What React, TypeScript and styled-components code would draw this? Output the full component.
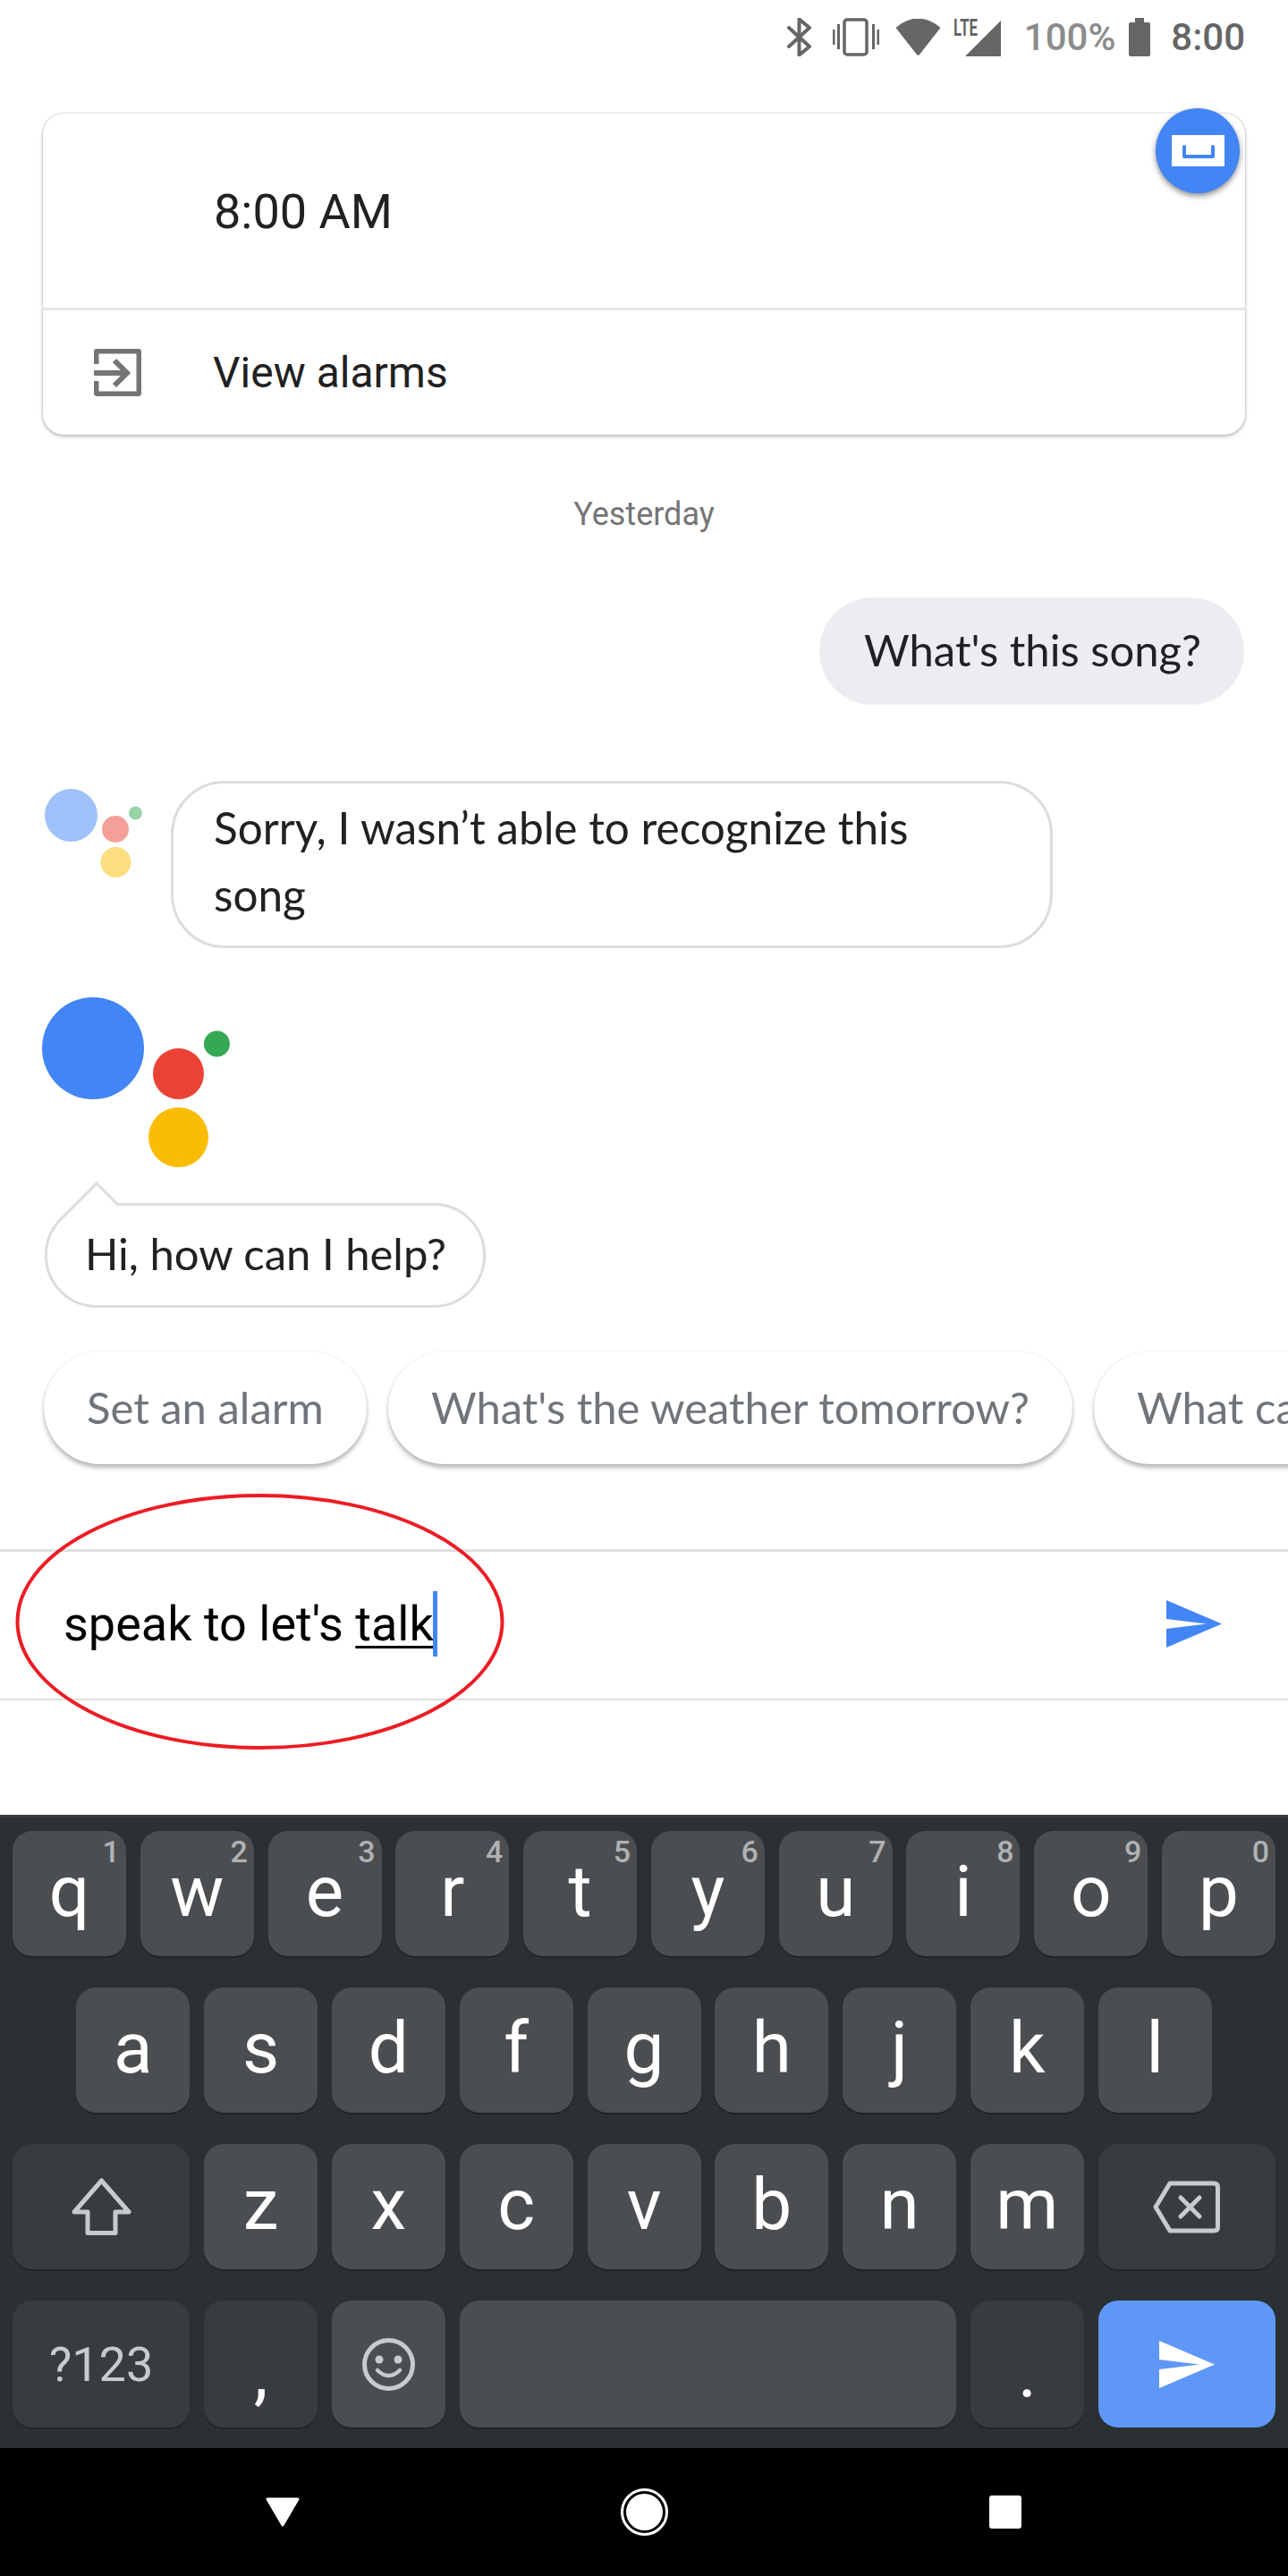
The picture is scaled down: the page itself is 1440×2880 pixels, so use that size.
import React from 'react';
import styled, { createGlobalStyle } from 'styled-components';

const GlobalStyle = createGlobalStyle`
    body {
        margin: 0;
        background: #fff;
        font-family: Roboto, "Liberation Sans", sans-serif;
    }
`;

const rowOne = [
    ['q', '1'],
    ['w', '2'],
    ['e', '3'],
    ['r', '4'],
    ['t', '5'],
    ['y', '6'],
    ['u', '7'],
    ['i', '8'],
    ['o', '9'],
    ['p', '0'],
];
const rowTwo = ['a', 's', 'd', 'f', 'g', 'h', 'j', 'k', 'l'];
const rowThree = ['z', 'x', 'c', 'v', 'b', 'n', 'm'];

const SendIcon: React.FC<{ color: string }> = ({ color }) => (
    <svg width="62" height="53" viewBox="0 0 62 53">
        <path d="M0 0L62 26.5L0 53V32L45 26.5L0 21Z" fill={color} />
    </svg>
);

const App: React.FC = () => {
    return (
        <Page>
            <GlobalStyle />
            <StatusBar>
                <StatusIcon width="27" height="43" viewBox="0 0 27 43">
                    <path
                        d="M2 11L25 32L13.5 41.5V1.5L25 11L2 32"
                        fill="none"
                        stroke="#666"
                        strokeWidth="4"
                        strokeLinejoin="round"
                        strokeLinecap="round"
                    />
                </StatusIcon>
                <StatusIcon $gap={24} width="52" height="43" viewBox="0 0 52 43">
                    <rect x="13" y="2" width="25" height="39" rx="3" fill="none" stroke="#666" strokeWidth="3.5" />
                    <path d="M0 13h2.5v17H0zM5 7h3v28H5zM44 7h3v28h-3zM49.5 13H52v17h-2.5z" fill="#666" />
                </StatusIcon>
                <StatusIcon $gap={18} width="51" height="41" viewBox="0 0 51 41">
                    <path
                        d="M1 10Q25.5 -10 50 10L26.5 40Q25.5 41 24.5 40Z"
                        fill="#666"
                        stroke="#666"
                        strokeLinejoin="round"
                    />
                </StatusIcon>
                <StatusIcon $gap={14} width="53" height="43" viewBox="0 0 53 43">
                    <text
                        x="0"
                        y="20"
                        fontFamily="Roboto, sans-serif"
                        fontWeight="700"
                        fontSize="26"
                        fill="#666"
                        textLength="27"
                        lengthAdjust="spacingAndGlyphs">
                        LTE
                    </text>
                    <path d="M13 43L53 3V43Z" fill="#666" />
                </StatusIcon>
                <BatteryText>100%</BatteryText>
                <StatusIcon $gap={15} width="24" height="43" viewBox="0 0 24 43">
                    <path d="M7 0H17V5H22Q24 5 24 7V41Q24 43 22 43H2Q0 43 0 41V7Q0 5 2 5H7Z" fill="#666" />
                </StatusIcon>
                <ClockText>8:00</ClockText>
            </StatusBar>

            <AlarmCard>
                <AlarmTime>8:00 AM</AlarmTime>
                <CardDivider />
                <AlarmLink>
                    <svg width="53" height="53" viewBox="0 0 53 53">
                        <path
                            d="M2.5 17V5Q2.5 2.5 5 2.5H48Q50.5 2.5 50.5 5V48Q50.5 50.5 48 50.5H5Q2.5 50.5 2.5 48V36"
                            fill="none"
                            stroke="#757575"
                            strokeWidth="6"
                        />
                        <path
                            d="M0 27H36M23 13L37 27L23 41"
                            fill="none"
                            stroke="#757575"
                            strokeWidth="6"
                        />
                    </svg>
                    <AlarmLinkText>View alarms</AlarmLinkText>
                </AlarmLink>
                <Fab>
                    <svg width="59" height="35" viewBox="0 0 59 35">
                        <rect width="59" height="35" fill="#fff" />
                        <path
                            d="M14 13V24H46V13"
                            fill="none"
                            stroke="#4285f4"
                            strokeWidth="4"
                            strokeLinecap="round"
                            strokeLinejoin="round"
                        />
                    </svg>
                </Fab>
            </AlarmCard>

            <DayLabel>Yesterday</DayLabel>
            <UserBubble>What's this song?</UserBubble>

            <ReplyRow>
                <SmallLogo width="109" height="99" viewBox="0 0 109 99">
                    <circle cx="29.5" cy="29.5" r="29.5" fill="#4285f4" />
                    <circle cx="79" cy="45" r="15" fill="#ea4335" />
                    <circle cx="79.5" cy="82" r="17" fill="#fbbc04" />
                    <circle cx="101.5" cy="27" r="7.5" fill="#34a853" />
                </SmallLogo>
                <ReplyBubble>
                    Sorry, I wasn’t able to recognize this
                    <br />
                    song
                </ReplyBubble>
            </ReplyRow>

            <BigLogo width="210" height="190" viewBox="0 0 210 190">
                <circle cx="57" cy="57" r="57" fill="#4285f4" />
                <circle cx="152.5" cy="85.5" r="28.5" fill="#ea4335" />
                <circle cx="152.5" cy="156.5" r="33.5" fill="#fbbc04" />
                <circle cx="195.5" cy="52" r="14.5" fill="#34a853" />
            </BigLogo>

            <GreetingBubble>
                <GreetingText>Hi, how can I help?</GreetingText>
            </GreetingBubble>

            <ChipRow>
                <Chip>Set an alarm</Chip>
                <Chip>What's the weather tomorrow?</Chip>
                <Chip>What can you do?</Chip>
            </ChipRow>

            <InputBar>
                <InputText>
                    speak to let's <Composing>talk</Composing>
                    <Caret />
                </InputText>
                <SendIcon color="#4285f4" />
            </InputBar>

            <Spacer />

            <Keyboard>
                <KeyRow>
                    {rowOne.map(([letter, hint]) => (
                        <LetterKey key={letter}>
                            {letter}
                            <Hint>{hint}</Hint>
                        </LetterKey>
                    ))}
                </KeyRow>
                <KeyRow>
                    {rowTwo.map(letter => (
                        <LetterKey key={letter}>{letter}</LetterKey>
                    ))}
                </KeyRow>
                <KeyRow>
                    <Key $width={198.5} $dark>
                        <svg width="67" height="64" viewBox="0 0 67 64">
                            <path
                                d="M33.5 3L64 38H49V61.5H18V38H3Z"
                                fill="none"
                                stroke="#c8cacb"
                                strokeWidth="5"
                                strokeLinejoin="round"
                            />
                        </svg>
                    </Key>
                    {rowThree.map(letter => (
                        <LetterKey key={letter}>{letter}</LetterKey>
                    ))}
                    <Key $width={198.5} $dark>
                        <svg width="75" height="59" viewBox="0 0 75 59">
                            <path
                                d="M3 29.5L19 3H68Q72.5 3 72.5 7V52Q72.5 56 68 56H19Z"
                                fill="none"
                                stroke="#c8cacb"
                                strokeWidth="5"
                                strokeLinejoin="round"
                            />
                            <path
                                d="M31 19L52 40M52 19L31 40"
                                fill="none"
                                stroke="#c8cacb"
                                strokeWidth="5"
                                strokeLinecap="round"
                            />
                        </svg>
                    </Key>
                </KeyRow>
                <KeyRow>
                    <SymbolKey $width={198.5} $dark>
                        ?123
                    </SymbolKey>
                    <PunctuationKey $dark>,</PunctuationKey>
                    <IconKey>
                        <svg width="59" height="59" viewBox="0 0 59 59">
                            <circle cx="29.5" cy="29.5" r="27" fill="none" stroke="#c8cacb" strokeWidth="5" />
                            <circle cx="19" cy="24" r="4.5" fill="#c8cacb" />
                            <circle cx="40" cy="24" r="4.5" fill="#c8cacb" />
                            <path
                                d="M17 36Q29.5 48 42 36"
                                fill="none"
                                stroke="#c8cacb"
                                strokeWidth="4.5"
                                strokeLinecap="round"
                            />
                        </svg>
                    </IconKey>
                    <IconKey $width={555.5} />
                    <PunctuationKey $dark>.</PunctuationKey>
                    <ActionKey>
                        <SendIcon color="#fff" />
                    </ActionKey>
                </KeyRow>
            </Keyboard>

            <NavBar>
                <svg width="38" height="33" viewBox="0 0 38 33">
                    <path
                        d="M2 2H36L19 31Z"
                        fill="#fff"
                        stroke="#fff"
                        strokeWidth="3"
                        strokeLinejoin="round"
                    />
                </svg>
                <HomeRing>
                    <HomeDot />
                </HomeRing>
                <RecentSquare />
            </NavBar>

            <Annotation width="547" height="288" viewBox="0 0 547 288">
                <ellipse cx="273.5" cy="144" rx="271" ry="141" fill="none" stroke="#ed1c24" strokeWidth="4" />
            </Annotation>
        </Page>
    );
};

const Page = styled.div`
    position: relative;
    display: flex;
    flex-direction: column;
    width: 1440px;
    height: 2880px;
    overflow: hidden;
    background: #fff;
`;

const StatusBar = styled.div`
    display: flex;
    justify-content: flex-end;
    align-items: center;
    height: 83px;
    padding-right: 48px;
    flex-shrink: 0;
`;

const StatusIcon = styled.svg<{ $gap?: number }>`
    margin-left: ${p => p.$gap ?? 0}px;
    flex-shrink: 0;
`;

const BatteryText = styled.span`
    margin-left: 26px;
    font-size: 42px;
    color: #8c8c8c;
    font-weight: 500;
`;

const ClockText = styled.span`
    margin-left: 23px;
    font-size: 42px;
    color: #666;
    font-weight: 500;
`;

const AlarmCard = styled.div`
    position: relative;
    display: flex;
    flex-direction: column;
    margin: 44px 48px 0;
    height: 359px;
    flex-shrink: 0;
    border-radius: 23px;
    background: #fff;
    box-shadow: 0 2px 4px rgba(0, 0, 0, 0.25), 0 0 2px rgba(0, 0, 0, 0.25);
`;

const AlarmTime = styled.div`
    box-sizing: border-box;
    display: flex;
    align-items: center;
    height: 217px;
    padding: 2px 0 0 191px;
    font-size: 54px;
    color: #212121;
`;

const CardDivider = styled.div`
    height: 3px;
    background: #e4e4e4;
`;

const AlarmLink = styled.div`
    display: flex;
    align-items: center;
    flex: 1;
    padding-left: 57px;
`;

const AlarmLinkText = styled.span`
    margin-left: 80px;
    font-size: 48px;
    color: #212121;
`;

const Fab = styled.div`
    position: absolute;
    top: -6px;
    right: 6px;
    display: flex;
    justify-content: center;
    align-items: center;
    width: 94px;
    height: 95px;
    border-radius: 50%;
    background: #4285f4;
    box-shadow: 0 3px 6px rgba(0, 0, 0, 0.45);
`;

const DayLabel = styled.div`
    margin-top: 67px;
    height: 44px;
    line-height: 44px;
    text-align: center;
    font-size: 36px;
    color: #757575;
`;

const UserBubble = styled.div`
    align-self: flex-end;
    margin: 71px 49px 0 0;
    height: 120px;
    line-height: 116px;
    padding: 0 48px 0 50px;
    border-radius: 60px;
    background: #ebedf0;
    font-family: Lato, sans-serif;
    font-size: 49px;
    color: #202124;
`;

const ReplyRow = styled.div`
    display: flex;
    align-items: flex-start;
    margin: 85px 0 0 50px;
`;

const SmallLogo = styled.svg`
    margin-top: 9px;
    opacity: 0.5;
    flex-shrink: 0;
`;

const ReplyBubble = styled.div`
    box-sizing: border-box;
    width: 986px;
    height: 187px;
    margin-left: 32px;
    padding: 12px 40px 0 45px;
    border: 3px solid #dadce0;
    border-radius: 60px;
    font-family: Lato, sans-serif;
    font-size: 49.5px;
    line-height: 75px;
    color: #202124;
`;

const BigLogo = styled.svg`
    margin: 55px 0 0 47px;
    flex-shrink: 0;
`;

const GreetingBubble = styled.div`
    position: relative;
    box-sizing: border-box;
    display: flex;
    align-items: center;
    width: 493px;
    height: 117px;
    margin: 40px 0 0 50px;
    padding: 0 0 6px 42px;
    border: 3px solid #dadce0;
    border-radius: 58px;
    &::before {
        content: '';
        position: absolute;
        left: 55px;
        top: -27px;
        width: 34px;
        height: 61px;
        box-sizing: border-box;
        border-top: 3px solid #dadce0;
        border-left: 3px solid #dadce0;
        background: #fff;
        transform: rotate(45deg);
        transform-origin: top left;
    }
`;

const GreetingText = styled.span`
    position: relative;
    font-family: Lato, sans-serif;
    font-size: 49px;
    color: #202124;
`;

const ChipRow = styled.div`
    display: flex;
    gap: 24px;
    margin-top: 43px;
    padding: 6px 0 12px 49px;
    overflow: hidden;
    flex-shrink: 0;
`;

const Chip = styled.div`
    flex-shrink: 0;
    height: 126px;
    line-height: 124px;
    padding: 0 48px;
    box-sizing: border-box;
    border-radius: 63px;
    background: #fff;
    box-shadow: 0 4px 5px rgba(0, 0, 0, 0.28), 0 0 2px rgba(0, 0, 0, 0.1);
    font-family: Lato, sans-serif;
    font-size: 49px;
    color: #70757a;
    white-space: nowrap;
`;

const InputBar = styled.div`
    box-sizing: border-box;
    display: flex;
    justify-content: space-between;
    align-items: center;
    height: 169px;
    margin-top: 83px;
    padding: 0 74px 3px 71px;
    border-top: 3px solid #e0e0e0;
    border-bottom: 2px solid #e0e0e0;
    flex-shrink: 0;
`;

const InputText = styled.div`
    display: flex;
    align-items: center;
    white-space: pre;
    font-size: 54px;
    color: #000;
`;

const Composing = styled.span`
    text-decoration: underline;
    text-decoration-thickness: 3px;
    text-underline-offset: 6px;
`;

const Caret = styled.span`
    width: 5px;
    height: 73px;
    margin-left: -1px;
    background: #4285f4;
`;

const Spacer = styled.div`
    flex: 1;
`;

const Keyboard = styled.div`
    display: flex;
    flex-direction: column;
    gap: 35px;
    height: 708px;
    box-sizing: border-box;
    padding-top: 15px;
    border-top: 3px solid #373c40;
    background: #2b3033;
    flex-shrink: 0;
`;

const KeyRow = styled.div`
    display: flex;
    justify-content: center;
    gap: 15.8px;
`;

const Key = styled.div<{ $width?: number; $dark?: boolean }>`
    position: relative;
    display: flex;
    justify-content: center;
    align-items: center;
    flex: 0 0 ${p => p.$width ?? 127}px;
    height: 140px;
    box-sizing: border-box;
    border-radius: 22px;
    background: ${p => (p.$dark ? '#383c40' : '#4a4e51')};
    box-shadow: 0 2px 0 #222528;
    font-size: 80px;
    color: #fff;
`;

const LetterKey = styled(Key)`
    padding-bottom: 4px;
`;

const IconKey = styled(Key)`
    height: 142px;
`;

const SymbolKey = styled(IconKey)`
    font-size: 54px;
    color: #c8cacb;
`;

const PunctuationKey = styled(IconKey)`
    padding-top: 20px;
`;

const ActionKey = styled(IconKey)`
    flex-basis: 198.5px;
    background: #5e97f6;
    box-shadow: none;
`;

const Hint = styled.span`
    position: absolute;
    top: 3px;
    right: 7px;
    font-size: 34px;
    line-height: 40px;
    font-weight: 500;
    color: #b0b2b4;
`;

const NavBar = styled.div`
    box-sizing: border-box;
    flex: 0 0 143px;
    display: grid;
    grid-template-columns: 1fr 1fr 1fr;
    justify-items: center;
    align-items: center;
    background: #000;
    padding: 0 114px;
`;

const HomeRing = styled.div`
    box-sizing: border-box;
    display: flex;
    justify-content: center;
    align-items: center;
    width: 53px;
    height: 53px;
    border: 3px solid #fff;
    border-radius: 50%;
`;

const HomeDot = styled.div`
    width: 41px;
    height: 41px;
    border-radius: 50%;
    background: #fff;
`;

const RecentSquare = styled.div`
    width: 36px;
    height: 37px;
    border-radius: 3px;
    background: #fff;
`;

const Annotation = styled.svg`
    position: absolute;
    left: 17px;
    top: 1669px;
`;

export default App;
